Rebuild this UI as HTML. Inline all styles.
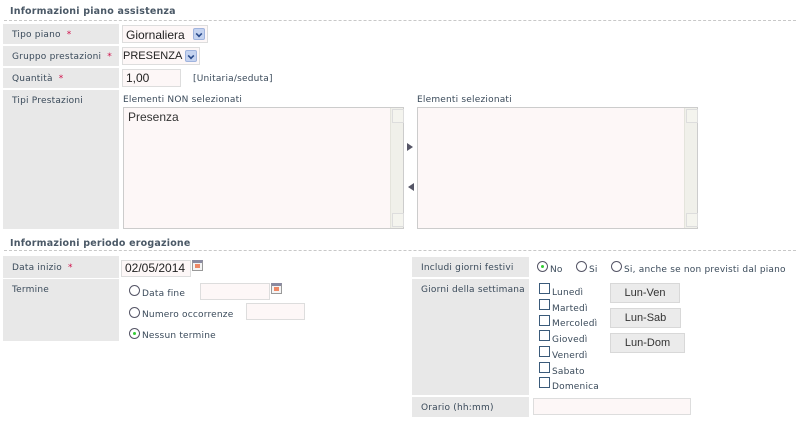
<!DOCTYPE html>
<html><head><meta charset="utf-8">
<style>
*{box-sizing:border-box;margin:0;padding:0}
body{width:800px;height:424px;background:#fff;position:relative;font-family:"DejaVu Sans","Liberation Sans",sans-serif;font-size:9px;letter-spacing:0.2px;color:#3a4a5a;overflow:hidden}
.a{position:absolute;white-space:nowrap}
.t{font-weight:bold;font-size:9.5px;color:#4a5866}
.dash{position:absolute;height:0;border-top:1px dashed #c8c8c8}
.lab{position:absolute;background:#e8e8e8;padding:6px 0 0 9px;color:#3a4a5a}
.star{color:#d0104a;margin-left:6px}
.inp{position:absolute;background:#fdf7f7;border:1px solid #ddd;font-family:"Liberation Sans",sans-serif;font-size:12px;letter-spacing:0;color:#222;padding:1px 0 0 3px;overflow:hidden;white-space:nowrap}
.sel .arr{position:absolute;right:2px;top:2px;width:12px;height:12px;background:#c5d3f0;border:1px solid #9fb3dd;border-radius:2px}
.arr::after{content:"";position:absolute;left:2px;top:2px;width:4px;height:4px;border-right:2px solid #2a4a8a;border-bottom:2px solid #2a4a8a;transform:rotate(45deg) scale(.8)}
.list{position:absolute;background:#fdf7f7;border:1px solid #ccc}
.sb{position:absolute;right:0;top:0;bottom:0;width:13px;background:#f0f0ea;border-left:1px solid #e4e4dc}
.sb::before,.sb::after{content:"";position:absolute;left:1px;width:10px;height:12px;background:#f4f4ee;border:1px solid #ddd}
.sb::before{top:1px}.sb::after{bottom:1px}
.rad{position:absolute;width:11px;height:11px;border:1px solid #556;border-radius:50%;background:#fff}
.rad.on::after{content:"";position:absolute;left:3px;top:3px;width:3px;height:3px;border-radius:50%;background:#3c3}
.chk{position:absolute;width:11px;height:11px;border:1px solid #3a5a7a;background:#fff}
.btn{position:absolute;background:#ebebeb;border:1px solid #d8d8d8;font-family:"Liberation Sans",sans-serif;font-size:11px;letter-spacing:0;color:#333;text-align:center}
.cal{position:absolute;width:11px;height:11px;background:#f4f4f4;border:1px solid #999;border-top:3px solid #8a8aa0}
.cal::after{content:"";position:absolute;left:2px;top:1px;width:5px;height:4px;background:#e86}
</style></head><body>
<div class="a t" style="left:10px;top:6px">Informazioni piano assistenza</div>
<div class="dash" style="left:4px;top:20px;width:792px"></div>

<div class="lab" style="left:3px;top:24px;width:116px;height:20px">Tipo piano<span class="star">*</span></div>
<div class="lab" style="left:3px;top:46px;width:116px;height:20px">Gruppo prestazioni<span class="star">*</span></div>
<div class="lab" style="left:3px;top:68px;width:116px;height:20px">Quantità<span class="star">*</span></div>
<div class="lab" style="left:3px;top:90px;width:116px;height:139px">Tipi Prestazioni</div>

<div class="inp sel" style="left:122px;top:25px;width:86px;height:18px;padding-top:2px">Giornaliera<span class="arr"></span></div>
<div class="inp sel" style="left:122px;top:47px;width:78px;height:18px;padding:2px 0 0 0;font-size:11px">PRESENZA<span class="arr"></span></div>
<div class="inp" style="left:122px;top:69px;width:59px;height:18px">1,00</div>
<div class="a" style="left:193px;top:74px">[Unitaria/seduta]</div>

<div class="a" style="left:123px;top:95px">Elementi NON selezionati</div>
<div class="list" style="left:123px;top:107px;width:281px;height:122px"><div class="sb"></div><div class="a" style="left:4px;top:2px;font-family:'Liberation Sans',sans-serif;font-size:12px;letter-spacing:0;color:#333">Presenza</div></div>
<div class="a" style="left:407px;top:143px;width:0;height:0;border-left:6px solid #556;border-top:4px solid transparent;border-bottom:4px solid transparent"></div>
<div class="a" style="left:408px;top:183px;width:0;height:0;border-right:6px solid #556;border-top:4px solid transparent;border-bottom:4px solid transparent"></div>
<div class="a" style="left:417px;top:95px">Elementi selezionati</div>
<div class="list" style="left:417px;top:107px;width:281px;height:122px"><div class="sb"></div></div>

<div class="a t" style="left:10px;top:238px">Informazioni periodo erogazione</div>
<div class="dash" style="left:4px;top:250px;width:792px"></div>

<div class="lab" style="left:3px;top:256px;width:116px;height:22px;padding-top:7px">Data inizio<span class="star">*</span></div>
<div class="lab" style="left:3px;top:279px;width:116px;height:62px">Termine</div>
<div class="inp" style="left:121px;top:260px;width:70px;height:17px;padding-top:0">02/05/2014</div>
<div class="cal" style="left:192px;top:260px"></div>
<div class="rad" style="left:129px;top:285px"></div><div class="a" style="left:142px;top:289px">Data fine</div>
<div class="inp" style="left:200px;top:283px;width:70px;height:17px"></div>
<div class="cal" style="left:271px;top:283px"></div>
<div class="rad" style="left:129px;top:307px"></div><div class="a" style="left:142px;top:310px">Numero occorrenze</div>
<div class="inp" style="left:246px;top:303px;width:59px;height:17px"></div>
<div class="rad on" style="left:129px;top:328px"></div><div class="a" style="left:142px;top:331px">Nessun termine</div>

<div class="lab" style="left:412px;top:257px;width:117px;height:20px">Includi giorni festivi</div>
<div class="lab" style="left:412px;top:279px;width:117px;height:116px">Giorni della settimana</div>
<div class="lab" style="left:412px;top:397px;width:117px;height:20px">Orario (hh:mm)</div>

<div class="rad on" style="left:537px;top:261px"></div><div class="a" style="left:550px;top:265px">No</div>
<div class="rad" style="left:576px;top:261px"></div><div class="a" style="left:589px;top:265px">Si</div>
<div class="rad" style="left:611px;top:261px"></div><div class="a" style="left:624px;top:265px">Si, anche se non previsti dal piano</div>

<div class="chk" style="left:539px;top:283px"></div><div class="a" style="left:552px;top:288px">Lunedì</div>
<div class="chk" style="left:539px;top:299px"></div><div class="a" style="left:552px;top:304px">Martedì</div>
<div class="chk" style="left:539px;top:315px"></div><div class="a" style="left:552px;top:319px">Mercoledì</div>
<div class="chk" style="left:539px;top:330px"></div><div class="a" style="left:552px;top:335px">Giovedì</div>
<div class="chk" style="left:539px;top:346px"></div><div class="a" style="left:552px;top:351px">Venerdì</div>
<div class="chk" style="left:539px;top:362px"></div><div class="a" style="left:552px;top:367px">Sabato</div>
<div class="chk" style="left:539px;top:377px"></div><div class="a" style="left:552px;top:382px">Domenica</div>

<div class="btn" style="left:610px;top:283px;width:70px;height:20px;line-height:18px">Lun-Ven</div>
<div class="btn" style="left:610px;top:308px;width:71px;height:20px;line-height:18px">Lun-Sab</div>
<div class="btn" style="left:610px;top:333px;width:75px;height:20px;line-height:18px">Lun-Dom</div>

<div class="inp" style="left:533px;top:398px;width:158px;height:17px"></div>
</body></html>
